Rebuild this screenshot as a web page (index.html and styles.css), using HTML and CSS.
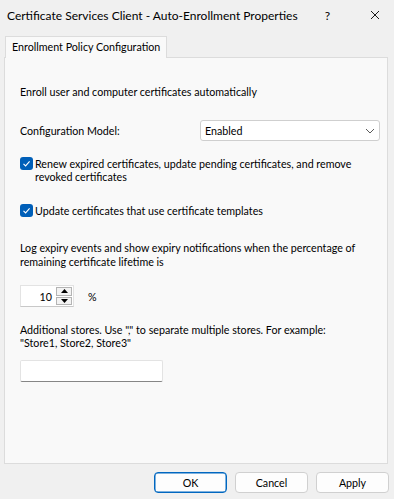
FILE: index.html
```html
<!DOCTYPE html>
<html>
<head>
<meta charset="utf-8">
<link rel="stylesheet" href="styles.css">
</head>
<body>
<div class="window">
  <div class="titlebar">
    <div class="title">Certificate Services Client - Auto-Enrollment Properties</div>
    <div class="cap-btn help">?</div>
    <div class="cap-btn close">
      <svg width="10" height="10" viewBox="0 0 10 10"><path d="M1 1 L9 9 M9 1 L1 9" stroke="#1a1a1a" stroke-width="1" fill="none"/></svg>
    </div>
  </div>
  <div class="tabs">
    <div class="tab">Enrollment Policy Configuration</div>
  </div>
  <div class="panel">
    <div class="text first">Enroll user and computer certificates automatically</div>
    <div class="config-row">
      <div class="label">Configuration Model:</div>
      <div class="select">
        <span>Enabled</span>
        <svg width="10" height="6" viewBox="0 0 10 6"><path d="M1 1 L5 5 L9 1" stroke="#5a5a5a" stroke-width="1" fill="none"/></svg>
      </div>
    </div>
    <div class="check-row cb1">
      <div class="checkbox"><svg width="13" height="13" viewBox="0 0 13 13"><path d="M3.5 6.8 L5.6 8.9 L9.6 4.4" stroke="#fff" stroke-width="1.1" fill="none"/></svg></div>
      <div class="check-label">Renew expired certificates, update pending certificates, and remove revoked certificates</div>
    </div>
    <div class="check-row cb2">
      <div class="checkbox"><svg width="13" height="13" viewBox="0 0 13 13"><path d="M3.5 6.8 L5.6 8.9 L9.6 4.4" stroke="#fff" stroke-width="1.1" fill="none"/></svg></div>
      <div class="check-label">Update certificates that use certificate templates</div>
    </div>
    <div class="text log">Log expiry events and show expiry notifications when the percentage of remaining certificate lifetime is</div>
    <div class="spin-row">
      <div class="spinner">
        <div class="spin-value">10</div>
        <div class="spin-btns">
          <div class="spin-btn up"><svg width="7" height="4" viewBox="0 0 7 4"><path d="M0 4 L3.5 0 L7 4 Z" fill="#000"/></svg></div>
          <div class="spin-btn down"><svg width="7" height="4" viewBox="0 0 7 4"><path d="M0 0 L7 0 L3.5 4 Z" fill="#000"/></svg></div>
        </div>
      </div>
      <div class="percent">%</div>
    </div>
    <div class="text stores">Additional stores. Use "," to separate multiple stores. For example: "Store1, Store2, Store3"</div>
    <div class="textbox"></div>
  </div>
  <div class="footer">
    <div class="btn default">OK</div>
    <div class="btn">Cancel</div>
    <div class="btn">Apply</div>
  </div>
</div>
</body>
</html>
```

FILE: styles.css
```css
html, body {
  margin: 0;
  padding: 0;
  background: #f0f0f0;
}
body {
  width: 394px;
  height: 499px;
  overflow: hidden;
  font-family: Lato, "Liberation Sans", sans-serif;
  font-size: 10.7px;
  color: #000;
}
.window {
  display: flex;
  flex-direction: column;
  height: 499px;
}
.titlebar {
  height: 30px;
  display: flex;
  align-items: center;
  padding-left: 7px;
  font-size: 12px;
}
.title {
  flex: 1;
  white-space: nowrap;
}
.cap-btn {
  height: 30px;
  display: flex;
  align-items: center;
}
.help {
  width: 47px;
  justify-content: center;
  font-size: 12px;
}
.close {
  width: 43px;
  padding-left: 19px;
  box-sizing: border-box;
}
.tabs {
  height: 27px;
  display: flex;
  align-items: flex-end;
  padding-left: 5px;
}
.tab {
  position: relative;
  z-index: 1;
  margin-bottom: -1px;
  width: 162px;
  height: 22px;
  box-sizing: border-box;
  border: 1px solid #dcdcdc;
  border-bottom: none;
  background: #f9f9f9;
  padding-left: 6px;
  line-height: 19px;
  white-space: nowrap;
}
.panel {
  margin: 0 6px 0 4px;
  height: 407px;
  box-sizing: border-box;
  border: 1px solid #dcdcdc;
  background: #f9f9f9;
  padding: 0 7px 0 15px;
  display: flex;
  flex-direction: column;
}
.text {
  line-height: 14px;
}
.first {
  margin-top: 26px;
  line-height: 15px;
}
.config-row {
  margin-top: 21px;
  display: flex;
  align-items: center;
  height: 21px;
}
.label {
  flex: none;
  width: 180px;
}
.select {
  flex: none;
  width: 180px;
  height: 21px;
  box-sizing: border-box;
  background: #fff;
  border: 1px solid #cfcfcf;
  border-radius: 3px;
  display: flex;
  align-items: center;
  justify-content: space-between;
  padding: 0 4px 0 4px;
}
.check-row {
  display: flex;
  align-items: flex-start;
}
.cb1 { margin-top: 16px; }
.cb2 { margin-top: 21px; }
.checkbox {
  width: 13px;
  height: 13px;
  border-radius: 3px;
  background: #005fb8;
  flex: none;
  display: flex;
}
.check-label {
  margin-left: 2px;
  line-height: 13px;
  max-width: 335px;
}
.log {
  margin-top: 24px;
  max-width: 352px;
}
.spin-row {
  margin-top: 16px;
  display: flex;
  align-items: center;
}
.spinner {
  width: 54px;
  height: 22px;
  box-sizing: border-box;
  background: #fff;
  border: 1px solid #e3e3e3;
  border-bottom-color: #c8c8c8;
  display: flex;
  align-items: center;
}
.spin-value {
  flex: 1;
  text-align: right;
  padding-right: 4px;
}
.spin-btns {
  width: 17px;
  height: 20px;
  display: flex;
  flex-direction: column;
  gap: 1px;
  padding: 1px 1px 1px 0;
  box-sizing: border-box;
}
.spin-btn {
  flex: 1;
  border: 1px solid #b4b4b4;
  background: #f3f3f3;
  display: flex;
  align-items: center;
  justify-content: center;
}
.percent {
  margin-left: 14px;
}
.stores {
  margin-top: 16px;
  line-height: 13px;
  max-width: 330px;
}
.textbox {
  margin-top: 11px;
  width: 143px;
  height: 22px;
  box-sizing: border-box;
  background: #fff;
  border: 1px solid #e3e3e3;
  border-bottom: 1px solid #868686;
  border-radius: 2px;
}
.footer {
  display: flex;
  justify-content: flex-end;
  gap: 8px;
  padding: 8px 5px 0 0;
}
.btn {
  width: 73px;
  height: 21px;
  box-sizing: border-box;
  background: #fdfdfd;
  border: 1px solid #d0d0d0;
  border-radius: 4px;
  display: flex;
  align-items: center;
  justify-content: center;
}
.btn.default {
  border-color: #0067c0;
  box-shadow: inset 0 0 0 0.5px #0067c0;
}
```
